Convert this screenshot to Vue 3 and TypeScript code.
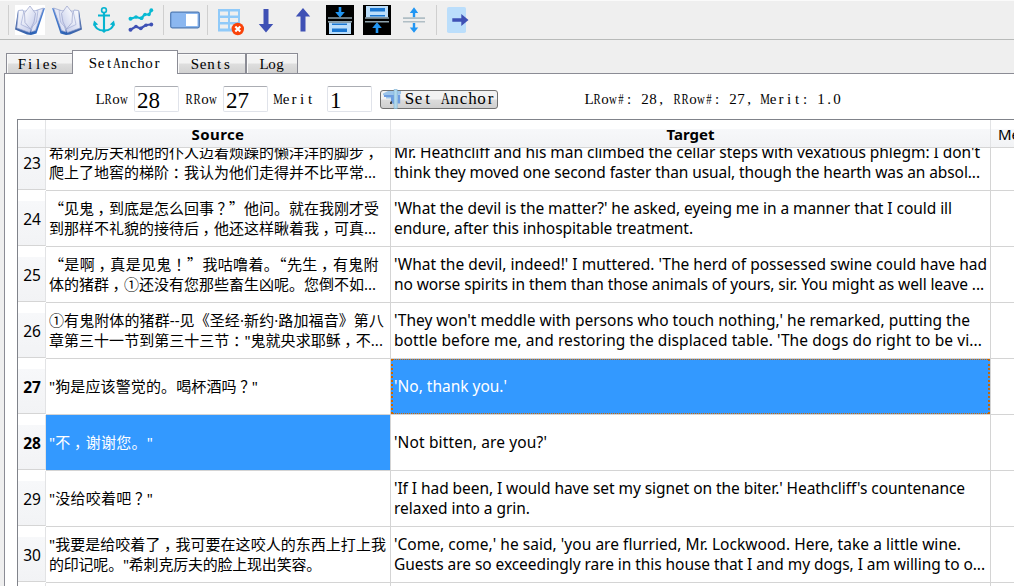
<script setup lang="ts">
import { h, type FunctionalComponent } from 'vue'

interface Line { text: string; width: number }
interface Row { id: number; source: Line[]; target: Line[]; current?: boolean; selected?: 'source' | 'target' }

const line = (text: string, width: number): Line => ({ text, width })

const rows: Row[] = [
  { id: 23, source: [line('希刺克厉夫和他的仆人迈着烦躁的懒洋洋的脚步，', 330), line('爬上了地窖的梯阶：我认为他们走得并不比平常...', 327)],
    target: [line("Mr. Heathcliff and his man climbed the cellar steps with vexatious phlegm: I don't", 586), line('think they moved one second faster than usual, though the hearth was an absol...', 586)] },
  { id: 24, source: [line('“见鬼，到底是怎么回事？”他问。就在我刚才受', 330), line('到那样不礼貌的接待后，他还这样瞅着我，可真...', 327)],
    target: [line("'What the devil is the matter?' he asked, eyeing me in a manner that I could ill", 558), line('endure, after this inhospitable treatment.', 299)] },
  { id: 25, source: [line('“是啊，真是见鬼！”我咕噜着。“先生，有鬼附', 330), line('体的猪群，①还没有您那些畜生凶呢。您倒不如...', 327)],
    target: [line("'What the devil, indeed!' I muttered. 'The herd of possessed swine could have had", 593), line('no worse spirits in them than those animals of yours, sir. You might as well leave ...', 590)] },
  { id: 26, source: [line('①有鬼附体的猪群--见《圣经·新约·路加福音》第八', 335), line('章第三十一节到第三十三节："鬼就央求耶稣，不...', 334)],
    target: [line("'They won't meddle with persons who touch nothing,' he remarked, putting the", 576), line("bottle before me, and restoring the displaced table. 'The dogs do right to be vi...", 588)] },
  { id: 27, current: true, selected: 'target', source: [line('"狗是应该警觉的。喝杯酒吗？"', 209)], target: [line("'No, thank you.'", 113)] },
  { id: 28, current: true, selected: 'source', source: [line('"不，谢谢您。"', 104)], target: [line("'Not bitten, are you?'", 153)] },
  { id: 29, source: [line('"没给咬着吧？"', 104)],
    target: [line("'If I had been, I would have set my signet on the biter.' Heathcliff's countenance", 571), line('relaxed into a grin.', 136)] },
  { id: 30, source: [line('"我要是给咬着了，我可要在这咬人的东西上打上我', 337), line('的印记呢。"希刺克厉夫的脸上现出笑容。', 272)],
    target: [line("'Come, come,' he said, 'you are flurried, Mr. Lockwood. Here, take a little wine.", 567), line('Guests are so exceedingly rare in this house that I and my dogs, I am willing to o...', 591)] },
]

// Spreads the letters of an element over the given width.
const vFit = {
  mounted(el: HTMLElement, binding: { value: number }) {
    const n = (el.textContent ?? '').length
    const natural = el.getBoundingClientRect().width
    el.style.letterSpacing = `${(binding.value - natural) / n}px`
  },
}

// Fixed-pitch serif text: every character sits centred in its own cell.
const Mono: FunctionalComponent<{ text: string }> = (props) =>
  h('span', { class: 'mono' }, [...props.text].map((c) =>
    h('span', { class: /[WMRAmw#]/.test(c) ? 'wide' : '' }, c)))
Mono.props = ['text']

// Separates full-width quotes and marks, which are set on their own.
const pieces = (text: string) => text.split(/([“”，：？！])/).filter(Boolean)
const pieceClass = (p: string) => (/^[“”]$/.test(p) ? 'quote' : /^[，：？！]$/.test(p) ? 'mid' : '')
</script>

<template>
  <div class="window">
    <div class="toolbar">
      <i class="sep"></i>
      <svg v-for="side in ['l', 'r']" :key="side" class="icon" :class="'book-' + side" viewBox="0 0 30 30">
        <defs>
          <linearGradient :id="'pg' + side" x1="0" y1="0" x2="1" y2="1">
            <stop offset="0" stop-color="#ffffff" /><stop offset="1" stop-color="#c3cbea" />
          </linearGradient>
          <linearGradient :id="'cv' + side" x1="0" y1="0" x2="1" y2="0">
            <stop offset="0" stop-color="#4a6aa8" /><stop offset=".6" stop-color="#2c62b4" /><stop offset="1" stop-color="#4f86dc" />
          </linearGradient>
        </defs>
        <path d="M3 5.500L0 24.500 12 29.500 16 30 21.500 28.500 30 3 27 4 18 25 4 21z" :fill="`url(#cv${side})`" />
        <path d="M3.500 5.500L8 5 16 25 14.500 27.500 1.800 23z" :fill="`url(#pg${side})`" stroke="#8c9ccc" stroke-width=".7" />
        <path d="M28.500 3L21 5.500 16 27 20.500 25.500z" :fill="`url(#pg${side})`" stroke="#8c9ccc" stroke-width=".7" />
        <path d="M9 6L6 19.500 15.500 24 21.500 17 23 5.500z" :fill="`url(#pg${side})`" stroke="#98a5d2" stroke-width=".6" />
        <path d="M15 1L20.500 8.500 19 17 15.500 24 10 17.500 9.500 8z" :fill="`url(#pg${side})`" stroke="#98a0c8" stroke-width=".7" />
      </svg>
      <svg class="icon" viewBox="0 0 30 30" fill="none" stroke="#06b4d0" stroke-width="2.100">
        <circle cx="15" cy="5.200" r="2.400" stroke-width="1.600" />
        <path d="M15 7.500V25M9 10.500H21M5.500 18.500C6 23.500 10 25.500 15 25.500S24 23.500 24.500 18.500" />
        <path d="M4 20.800L5 15.500 9.200 19.500zM26 20.800L25 15.500 20.800 19.500zM12 25L15 28 18 25z" fill="#06b4d0" stroke="none" />
      </svg>
      <svg class="icon" viewBox="0 0 30 30" fill="none" stroke-width="2.200" stroke-linejoin="round">
        <path d="M4 14L10 12 15.500 13.500 18.500 9.500 23 9.500 25.500 5" stroke="#08bad3" />
        <g fill="#08bad3"><circle cx="4.500" cy="13.700" r="2" /><circle cx="10" cy="12" r="1.800" /><circle cx="15.500" cy="13.200" r="1.900" /><circle cx="19" cy="9.500" r="1.700" /><circle cx="23" cy="9.500" r="1.700" /><circle cx="25.300" cy="5.200" r="1.900" /></g>
        <path d="M4 25L10 21.500 14.500 23.500 20 20 25.500 19.500" stroke="#3f51b5" />
        <g fill="#3f51b5"><circle cx="4.500" cy="24.700" r="2" /><circle cx="10" cy="21.500" r="1.800" /><circle cx="14.800" cy="23.300" r="1.900" /><circle cx="20" cy="20.300" r="1.800" /><circle cx="25.300" cy="19.500" r="1.900" /></g>
      </svg>
      <i class="sep"></i>
      <svg class="icon" viewBox="0 0 30 30">
        <rect x=".700" y="7.200" width="28.600" height="15.600" rx="1.500" fill="#8bb7f0" stroke="#4e7ab5" stroke-width="1.200" />
        <rect x="16" y="9" width="11.500" height="12" fill="#fff" />
      </svg>
      <i class="sep"></i>
      <svg class="icon" viewBox="0 0 30 30">
        <rect x="4" y="4" width="22" height="22.500" fill="#90caf9" />
        <g fill="#efefef"><path d="M6 6.500h8v4H6zM16 6.500h8v4h-8zM6 13h8v4H6zM16 13h8v4h-8zM6 19.500h8v4H6zM16 19.500h8v4h-8z" /></g>
        <circle cx="23.800" cy="24" r="6.200" fill="#f9430a" />
        <path d="M21.300 21.500l5 5m0-5l-5 5" stroke="#fff" stroke-width="2.200" />
      </svg>
      <svg class="icon" viewBox="0 0 30 30"><path d="M12.500 4h5v15h4.700L15 27.500 7.800 19h4.700z" fill="#3f51b5" /></svg>
      <svg class="icon" viewBox="0 0 30 30"><path d="M12.500 26.500h5v-15h4.700L15 3 7.800 11.500h4.700z" fill="#3f51b5" /></svg>
      <svg class="icon" viewBox="0 0 30 30">
        <path d="M1 0h28v30H1z" fill="#000" />
        <path d="M13.700 2h2.600v5h3.500L15 12.800 10.200 7h3.500z" fill="#2196f3" />
        <path d="M3 12.300h24v1.500H3zM3 16h24v1.500H3z" fill="#90a4ae" />
        <path d="M4 17.500h22V29H4z" fill="#bbdefb" />
        <path d="M7 18.500h15v1.600H7zM7 23.500h15v3.500H7z" fill="#1976d2" />
      </svg>
      <svg class="icon" viewBox="0 0 30 30">
        <path d="M1 0h28v30H1z" fill="#000" />
        <path d="M4 1h22v11.500H4z" fill="#bbdefb" />
        <path d="M8 3h15v3.500H8zM8 10h15v1.600H8z" fill="#1976d2" />
        <path d="M3 12.300h24v1.500H3zM3 16h24v1.500H3z" fill="#90a4ae" />
        <path d="M13.700 28h2.600v-5h3.500L15 17.200 10.200 23h3.500z" fill="#2196f3" />
      </svg>
      <svg class="icon" viewBox="0 0 30 30">
        <path d="M13.800 12.500V8h-3L15 2.200 19.200 8h-3v4.500zM13.800 18v4.500h-3l4.200 5.300 4.200-5.300h-3V18z" fill="#2196f3" />
        <path d="M4 12.300h22v1.600H4zM4 16h22v1.600H4z" fill="#b0bec5" />
      </svg>
      <i class="sep"></i>
      <svg class="icon" viewBox="0 0 30 30">
        <rect x="4" y="2" width="19" height="26" rx="1.800" fill="#bbdefb" />
        <path d="M9.300 13.200h9V9L25.500 15l-7.200 6v-4.200h-9z" fill="#3f51b5" />
      </svg>
    </div>

    <div class="tabs">
      <div class="tab files"><Mono text="Files" /></div>
      <div class="tab active"><Mono text="SetAnchor" /></div>
      <div class="tab sents"><Mono text="Sents" /></div>
      <div class="tab log"><Mono text="Log" /></div>
    </div>

    <div class="panel">
      <div class="controls">
        <label class="l1"><Mono text="LRow" /></label>
        <div class="field"><span>28</span></div>
        <label class="l2"><Mono text="RRow" /></label>
        <div class="field"><span>27</span></div>
        <label class="l3"><Mono text="Merit" /></label>
        <div class="field"><span>1</span></div>
        <button class="set">
          <svg viewBox="0 0 20 20">
            <path d="M1 4.500L6 2H19V5H16L15 7H12V9.500L9 15V9.500H4V7L1 6z" fill="#9cc5ea" />
            <path d="M2 6h13v2H2zM9 8h3v7l-3-1zM15.500 5.500h2.700v9h-2.700z" fill="#6d9de0" />
            <path d="M8 13l2-1v3H8z" fill="#444" />
            <path d="M12 .500h3.200v19H12z" fill="#b2d9ed" stroke="#7eb1d5" stroke-width=".600" />
          </svg>
          <Mono text="Set Anchor" />
        </button>
        <div class="status"><Mono text="LRow#: 28, RRow#: 27, Merit: 1.0" /></div>
      </div>

      <div class="table">
        <div class="grid head">
          <div class="th"></div>
          <div class="th bold"><span v-fit="53">Source</span></div>
          <div class="th bold"><span v-fit="48">Target</span></div>
          <div class="th merit">Merit</div>
        </div>
        <div class="body">
          <div v-for="row in rows" :key="row.id" class="grid row">
            <div class="num" :class="{ bold: row.current }"><span>{{ row.id }}</span></div>
            <div class="cell" :class="{ selected: row.selected === 'source' }">
              <div v-for="l in row.source" :key="l.text" class="line"><span v-fit="l.width"><span v-for="(p, i) in pieces(l.text)" :key="i" :class="pieceClass(p)">{{ p }}</span></span></div>
            </div>
            <div class="cell latin" :class="{ selected: row.selected === 'target', focused: row.selected === 'target' }">
              <div v-for="l in row.target" :key="l.text" class="line"><span v-fit="l.width">{{ l.text }}</span></div>
            </div>
            <div class="cell"></div>
          </div>
          <div class="grid row">
            <div class="num"></div><div class="cell"></div><div class="cell"></div><div class="cell"></div>
          </div>
        </div>
      </div>
    </div>
  </div>
</template>

<style>
html, body { overflow: hidden; }
.mono { display: inline-flex; --pitch: 8px; }
.mono > span { width: var(--pitch); flex: none; display: flex; justify-content: center; white-space: pre; }
.mono > .wide { transform: scaleX(.72); }
</style>

<style scoped>
* { box-sizing: border-box; }
.window {
  width: 1014px; height: 586px; overflow: hidden; background: #efefef; color: #000;
  display: flex; flex-direction: column;
  font-family: "Liberation Serif", "Times New Roman", serif; font-size: 15px; white-space: nowrap;
}
.toolbar { height: 40px; flex: none; display: flex; padding: 4px 0 0 8px; border-top: 1px solid #fafafa; border-bottom: 1px solid #b8bab9; }
.sep { width: 1px; height: 30px; background: #cfcfcf; margin-right: 6px; }
.icon { width: 30px; height: 30px; margin-right: 7px; flex: none; display: block; overflow: visible; }
.book-l { background: #fff; }
.book-r { transform: scaleX(-1); }

.tabs { height: 33px; flex: none; display: flex; align-items: flex-end; padding-left: 6px; }
.tab {
  height: 20px; border: 1px solid #8b8c95; border-bottom: 0; line-height: 20px;
  background: linear-gradient(#f3f3f3 0 48%, #dedede 52%, #d2d2d2);
  box-shadow: inset 1px 1px #fafafa;
}
.files { width: 66px; padding-left: 11px; border-right: 0; }
.sents { width: 68px; padding-left: 13px; border-left: 0; }
.log { width: 52px; padding-left: 13px; }
.active {
  width: 106px; height: 24px; margin-bottom: -1px; padding-left: 16px; line-height: 24px;
  background: #fff; position: relative; z-index: 1; box-shadow: none;
}

.panel { margin-left: 4px; flex: 1; min-height: 0; background: #fff; border: 1px solid #8b8c95; border-right: 0; border-bottom: 0; display: flex; flex-direction: column; }
.controls { height: 45px; flex: none; display: flex; align-items: center; padding: 5px 0 0 91px; }
.l1 { width: 38px; }
.l2 { width: 38px; margin-left: 6px; }
.l3 { width: 53px; margin-left: 6px; }
.field {
  width: 45px; height: 26px; border: 1px solid #e0e3ea; border-top-color: #abadb3; border-radius: 2px;
  font-size: 23px; line-height: 28px; padding-left: 2px;
}
.set {
  margin: 0 0 0 8px; padding: 0 0 0 1px; width: 118px; height: 19px; border: 1px solid #707070; border-radius: 3px;
  background: linear-gradient(#f2f2f2 0 48%, #dcdcdc 52%, #cfcfcf);
  font: 17px "Liberation Serif", serif; display: flex; align-items: center; color: #000;
}
.set .mono { --pitch: 9px; }
.set svg { width: 20px; height: 20px; margin-right: 3px; flex: none; }
.status { margin-left: 87px; }

.table {
  flex: 1; min-height: 0; margin-left: 12px; border: 1px solid #80838a; border-right: 0; border-bottom: 0;
  display: flex; flex-direction: column; font-family: "Noto Sans", "Noto Sans CJK SC", sans-serif; font-size: 15px;
}
.grid { display: grid; grid-template-columns: 28px 345px 600px 1fr; }
.head { height: 28px; flex: none; border-bottom: 1px solid #d5d5d5; }
.th {
  background: linear-gradient(#fff 0 9px, #f7f8fa 9px, #f2f3f5); border-right: 1px solid #e2e3e5;
  text-align: center; line-height: 28px; overflow: hidden;
}
.merit { text-align: left; padding-left: 7px; border-right: 0; }
.bold { font-weight: 700; }
.body { flex: 1; min-height: 0; overflow: hidden; }
.row { height: 56px; }
.row:first-child { margin-top: -13px; }
.num {
  height: 55px; border-bottom: 1px solid #d5d5d5; border-right: 1px solid #e2e3e5; text-align: center; line-height: 56px;
  background: linear-gradient(#fff 0 10px, #f7f8fa 10px, #f2f3f5); padding-left: 1px;
  font-size: 15.500px;
}
.cell {
  border-right: 1px solid #d4d4d4; border-bottom: 1px solid #d4d4d4; padding: 0 0 2px 3px;
  display: flex; flex-direction: column; justify-content: center; overflow: hidden;
}
.cell:last-child { border-right: 0; }
.latin { font-size: 15.500px; }
.line { height: 20px; line-height: 20px; }
.line > span { display: inline-block; }
.selected { background: #3399ff; color: #fff; }
.focused { position: relative; }
.focused::after { content: ""; position: absolute; inset: 0; border: 1px dotted #cc6600; border-width: 1px 2px; }
.quote { font-family: "Noto Sans CJK SC", sans-serif; }
.mid { display: inline-block; transform: translateX(3.500px); }
</style>
